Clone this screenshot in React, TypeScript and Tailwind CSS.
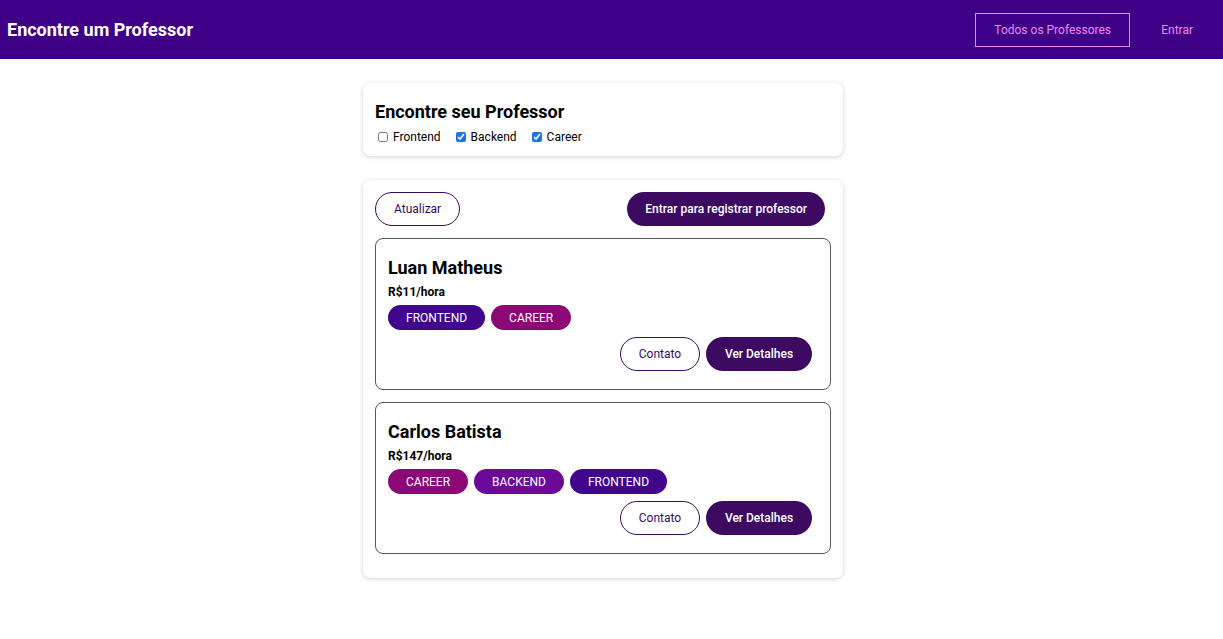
import { useState } from 'react'

type Teacher = { name: string; price: number; tags: string[] }

const teachers: Teacher[] = [
  { name: 'Luan Matheus', price: 11, tags: ['frontend', 'career'] },
  { name: 'Carlos Batista', price: 147, tags: ['career', 'backend', 'frontend'] },
]

const tagColor: Record<string, string> = {
  frontend: 'bg-[#40078c]',
  backend: 'bg-[#6c0a98]',
  career: 'bg-[#8c0874]',
}

export default function App() {
  const [filters, setFilters] = useState({ frontend: false, backend: true, career: true })

  return (
    <div className="min-h-screen bg-white font-['Roboto',sans-serif] text-black">
      {/* Header */}
      <header className="h-[59px] bg-[#3f0088] flex items-center justify-between pl-[7px] pr-[30px]">
        <h1 className="text-[18px] font-bold text-white">Encontre um Professor</h1>
        <nav className="flex items-center gap-[31px]">
          <button className="h-[34px] w-[155px] border border-[#e88cf5] text-[#e88cf5] text-[12px]">
            Todos os Professores
          </button>
          <button className="text-[#e88cf5] text-[12px]">Entrar</button>
        </nav>
      </header>

      <div className="pr-[17px]">
        <main className="w-[480px] mx-auto pt-6 flex flex-col gap-6">
          {/* Filters */}
          <section className="rounded-lg shadow-[0_1px_5px_rgba(0,0,0,0.18)] px-3 pt-[17px] pb-[10px]">
            <h2 className="text-[18px] font-bold leading-[24px]">Encontre seu Professor</h2>
            <div className="flex items-center gap-[15px] mt-[4px] text-[12px] pl-[3px]">
              {(['frontend', 'backend', 'career'] as const).map((f) => (
                <label key={f} className="flex items-center gap-[5px]">
                  <input
                    type="checkbox"
                    checked={filters[f]}
                    onChange={() => setFilters({ ...filters, [f]: !filters[f] })}
                    className="w-[10px] h-[10px] m-0 accent-[#1a73e8]"
                  />
                  {f[0].toUpperCase() + f.slice(1)}
                </label>
              ))}
            </div>
          </section>

          {/* List */}
          <section className="rounded-lg shadow-[0_1px_5px_rgba(0,0,0,0.18)] p-3 pb-6">
            <div className="flex items-center justify-between">
              <button className="h-[34px] px-[18px] rounded-full border border-[#3a0a5c] text-[#3a0a5c] text-[12px]">
                Atualizar
              </button>
              <button className="h-[34px] px-[18px] mr-[6px] rounded-full bg-[#3d0a62] text-white text-[12px] font-medium">
                Entrar para registrar professor
              </button>
            </div>

            <div className="flex flex-col gap-3 mt-3">
              {teachers.map((t) => (
                <div key={t.name} className="rounded-lg border border-[#555] px-3 pt-[16px] pb-[18px]">
                  <h3 className="text-[18px] font-bold leading-[26px]">{t.name}</h3>
                  <p className="text-[12px] font-bold mt-[2px]">R${t.price}/hora</p>
                  <div className="flex gap-[6px] mt-[4px]">
                    {t.tags.map((tag) => (
                      <span
                        key={tag}
                        className={`h-[25px] px-[18px] rounded-full text-white text-[12px] flex items-center ${tagColor[tag]}`}
                      >
                        {tag.toUpperCase()}
                      </span>
                    ))}
                  </div>
                  <div className="flex justify-end gap-[6px] mt-[7px] pr-[6px]">
                    <button className="h-[34px] w-[80px] rounded-full border border-[#3a0a5c] text-[#3a0a5c] text-[12px]">
                      Contato
                    </button>
                    <button className="h-[34px] w-[106px] rounded-full bg-[#3d0a62] text-white text-[12px] font-medium">
                      Ver Detalhes
                    </button>
                  </div>
                </div>
              ))}
            </div>
          </section>
        </main>
      </div>
    </div>
  )
}
